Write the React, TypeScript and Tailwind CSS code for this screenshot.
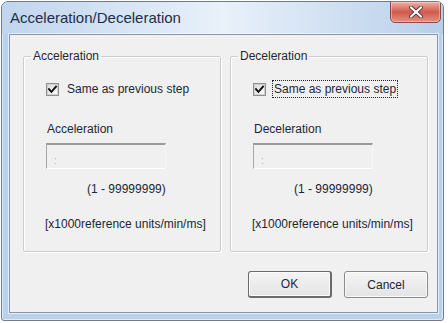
import React from "react";

const font = { fontFamily: '"Liberation Sans", Arial, sans-serif' };

function CheckBox() {
  return (
    <div className="w-[13px] h-[13px] border border-[#8e8f8f] bg-white flex items-center justify-center shrink-0">
      <div className="w-[11px] h-[11px] border border-[#d0d0d0] bg-gradient-to-br from-[#dcdcdc] to-[#fbfbfb] flex items-center justify-center">
        <svg width="9" height="9" viewBox="0 0 9 9">
          <path d="M1 4.2 L3.4 6.8 L8 1.6" fill="none" stroke="#111" strokeWidth="1.9" strokeLinecap="square" />
        </svg>
      </div>
    </div>
  );
}

function Group({ title, label, focused }: { title: string; label: string; focused?: boolean }) {
  return (
    <fieldset className="w-[198px] h-[203px] border border-[#cdcdcd] rounded-[2px] shadow-[inset_1px_1px_0_#ffffff,1px_1px_0_#ffffff] min-w-0">
      <legend className="ml-[7px] px-[2px] h-[14px] leading-[14px] text-[12px] text-[#1d2636]">{title}</legend>
      <div className="pl-[22px]">
        <div className="mt-[17px] h-[18px] flex items-center">
          <CheckBox />
          <span
            className={
              "ml-[6px] h-[18px] leading-[16px] px-[1px] text-[12px] text-[#1d2636] border border-dotted " +
              (focused ? "border-[#222]" : "border-transparent")
            }
          >
            Same as previous step
          </span>
        </div>
        <div className="mt-[24px] ml-[1px] h-[14px] leading-[14px] text-[12px] text-[#1d2636]">{label}</div>
        <div className="mt-[7px] w-[120px] h-[26px] border-t-2 border-l border-b border-r border-t-[#9a9a9a] border-l-[#a8a8a8] border-b-[#ffffff] border-r-[#f6f6f6] bg-[#f0f0f0] pl-[7px] pt-[2px]">
          <span className="text-[10px] leading-[12px] text-[#b9a9a9]">:</span>
        </div>
        <div className="mt-[13px] ml-[41px] h-[14px] leading-[14px] text-[12px] text-[#1d2636]">(1 - 99999999)</div>
        <div className="mt-[21px] -ml-[1px] h-[14px] leading-[14px] text-[12px] text-[#1d2636] whitespace-nowrap">
          [x1000reference units/min/ms]
        </div>
      </div>
    </fieldset>
  );
}

function Button({ children, def }: { children: React.ReactNode; def?: boolean }) {
  return (
    <div
      className={
        "w-[84px] h-[27px] rounded-[3px] border flex items-center justify-center text-[12px] text-[#1d2636] bg-gradient-to-b from-[#f4f4f4] to-[#e4e4e4] shadow-[inset_0_0_0_1px_#fbfbfb] " +
        (def ? "border-[#6a6a6a] border-b-2 border-r-2" : "border-[#8a8a8a]")
      }
    >
      {children}
    </div>
  );
}

export default function App() {
  return (
    <div className="w-[448px] h-[323px] bg-white pt-[1px] pl-[1px]" style={font}>
      <div className="w-[443px] h-[320px] border border-[#6f7c8c] rounded-t-[7px] rounded-b-[3px] bg-[#bad1eb] shadow-[inset_0_0_0_1px_rgba(255,255,255,0.55)] flex flex-col overflow-hidden">
        <div className="h-[32px] flex items-start justify-between bg-gradient-to-r from-[#c0d5ee] via-[#e9f1fa] to-[#b8cfea]">
          <div className="pl-[8px] pt-[7px] text-[15px] leading-[18px] text-[#1e2f48]">Acceleration/Deceleration</div>
          <div className="mr-[2px] -mt-[1px] w-[51px] h-[22px] rounded-b-[5px] border border-[#8a4a44] bg-gradient-to-b from-[#eeb0a4] via-[#d0594c] to-[#e0917e] shadow-[inset_0_0_0_1px_rgba(255,255,255,0.35)] flex items-center justify-center">
            <svg width="16" height="12" viewBox="0 0 16 12">
              <path d="M3 1.5 L13 10.5 M13 1.5 L3 10.5" stroke="#5a3a3a" strokeWidth="4" strokeLinecap="round" />
              <path d="M3 1.5 L13 10.5 M13 1.5 L3 10.5" stroke="#ffffff" strokeWidth="2.2" strokeLinecap="round" />
            </svg>
          </div>
        </div>
        <div className="ml-[7px] mr-[5px] mb-[7px] flex-1 border border-[#8797ab] bg-[#f0f0f0] shadow-[0_0_0_1px_rgba(255,255,255,0.6)] flex flex-col">
          <div className="mt-[14px] ml-[13px] flex gap-[9px]">
            <Group title="Acceleration" label="Acceleration" />
            <Group title="Deceleration" label="Deceleration" focused />
          </div>
          <div className="mt-[19px] mr-[9px] flex justify-end gap-[12px]">
            <Button def>OK</Button>
            <Button>Cancel</Button>
          </div>
        </div>
      </div>
    </div>
  );
}
